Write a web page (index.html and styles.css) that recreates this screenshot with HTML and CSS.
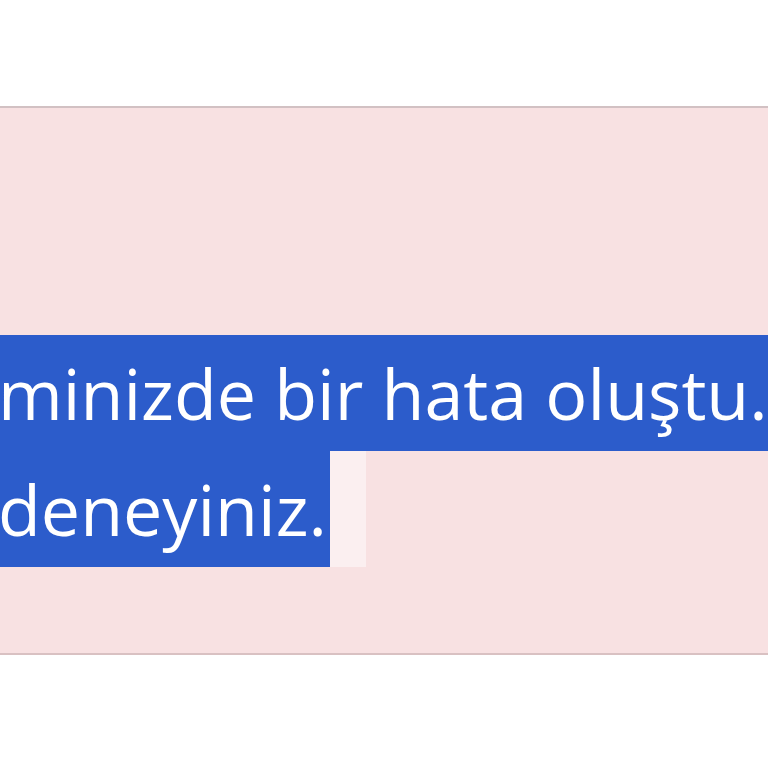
FILE: index.html
```html
<!DOCTYPE html>
<html lang="tr">
<head>
<meta charset="utf-8">
<link rel="stylesheet" href="styles.css">
</head>
<body>
<div class="alert">
  <div class="line line-full"><span class="text">minizde bir hata oluştu.</span></div>
  <div class="line line-part"><span class="sel"><span class="text">deneyiniz.</span></span><span class="tail"></span></div>
</div>
</body>
</html>
```
FILE: styles.css
```css
html, body {
  margin: 0;
  padding: 0;
  background: #ffffff;
  width: 768px;
  height: 768px;
  overflow: hidden;
}
.alert {
  margin-top: 106px;
  border-top: 2px solid #d2c1c3;
  border-bottom: 2px solid #d9c1c2;
  background: #f8e1e2;
  padding-top: 227px;
  padding-bottom: 86px;
  font-family: "Open Sans", "Noto Sans", sans-serif;
  font-size: 70px;
  color: #ffffff;
}
.line {
  height: 116px;
  line-height: 116px;
  white-space: nowrap;
  overflow: hidden;
}
.line-full {
  background: #2c5ccb;
}
.line-part {
  display: flex;
}
.sel {
  display: block;
  width: 330px;
  background: #2c5ccb;
  overflow: hidden;
}
.tail {
  display: block;
  width: 36px;
  background: #fbeff0;
}
.text {
  display: inline-block;
  margin-left: -2px;
}
```
